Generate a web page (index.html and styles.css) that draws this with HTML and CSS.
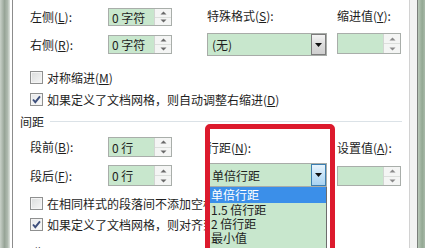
FILE: index.html
```html
<!DOCTYPE html>
<html>
<head>
<meta charset="utf-8">
<link rel="stylesheet" href="styles.css">
</head>
<body>
<div class="screen">
  <div class="bg-left"></div>
  <div class="dialog">
    <div class="block top">
      <div class="lgroup">
        <div class="frow r1"><span class="lbl">左侧(<u>L</u>):</span>
          <div class="spin"><span class="val">0 字符</span><span class="arrows"><span class="ab"><svg width="7" height="4" viewBox="0 0 7 4"><path d="M0.5 3.5 L3.5 0.5 L6.5 3.5Z" fill="#6a6a6a"/></svg></span><span class="ab"><svg width="7" height="4" viewBox="0 0 7 4"><path d="M0.5 0.5 L3.5 3.5 L6.5 0.5Z" fill="#6a6a6a"/></svg></span></span></div>
        </div>
        <div class="frow r2"><span class="lbl">右侧(<u>R</u>):</span>
          <div class="spin"><span class="val">0 字符</span><span class="arrows"><span class="ab"><svg width="7" height="4" viewBox="0 0 7 4"><path d="M0.5 3.5 L3.5 0.5 L6.5 3.5Z" fill="#6a6a6a"/></svg></span><span class="ab"><svg width="7" height="4" viewBox="0 0 7 4"><path d="M0.5 0.5 L3.5 3.5 L6.5 0.5Z" fill="#6a6a6a"/></svg></span></span></div>
        </div>
      </div>
      <div class="col2">
        <div class="clbl">特殊格式(<u>S</u>):</div>
        <div class="select sel-top"><span class="val">(无)</span><span class="dbtn"><svg width="7" height="4" viewBox="0 0 7 4"><path d="M0 0 L7 0 L3.5 4Z" fill="#111"/></svg></span></div>
      </div>
      <div class="col3">
        <div class="clbl">缩进值(<u>Y</u>):</div>
        <div class="spin spin-top"><span class="val"></span><span class="arrows"><span class="ab"><svg width="7" height="4" viewBox="0 0 7 4"><path d="M0.5 3.5 L3.5 0.5 L6.5 3.5Z" fill="#8a8a8a"/></svg></span><span class="ab"><svg width="7" height="4" viewBox="0 0 7 4"><path d="M0.5 0.5 L3.5 3.5 L6.5 0.5Z" fill="#8a8a8a"/></svg></span></span></div>
      </div>
    </div>

    <div class="chk c1"><span class="box"></span><span>对称缩进(<u>M</u>)</span></div>
    <div class="chk c2"><span class="box checked"><svg width="11" height="11" viewBox="0 0 11 11"><path d="M2 5.5 L4.3 8.2 L9 2.3" fill="none" stroke="#3d4f7c" stroke-width="1.9"/></svg></span><span>如果定义了文档网格，则自动调整右缩进(<u>D</u>)</span></div>

    <div class="section"><span>间距</span><span class="line"></span></div>

    <div class="block low">
      <div class="lgroup">
        <div class="frow r1"><span class="lbl">段前(<u>B</u>):</span>
          <div class="spin"><span class="val">0 行</span><span class="arrows"><span class="ab"><svg width="7" height="4" viewBox="0 0 7 4"><path d="M0.5 3.5 L3.5 0.5 L6.5 3.5Z" fill="#6a6a6a"/></svg></span><span class="ab"><svg width="7" height="4" viewBox="0 0 7 4"><path d="M0.5 0.5 L3.5 3.5 L6.5 0.5Z" fill="#6a6a6a"/></svg></span></span></div>
        </div>
        <div class="frow r2"><span class="lbl">段后(<u>F</u>):</span>
          <div class="spin"><span class="val">0 行</span><span class="arrows"><span class="ab"><svg width="7" height="4" viewBox="0 0 7 4"><path d="M0.5 3.5 L3.5 0.5 L6.5 3.5Z" fill="#6a6a6a"/></svg></span><span class="ab"><svg width="7" height="4" viewBox="0 0 7 4"><path d="M0.5 0.5 L3.5 3.5 L6.5 0.5Z" fill="#6a6a6a"/></svg></span></span></div>
        </div>
      </div>
      <div class="col2">
        <div class="clbl">行距(<u>N</u>):</div>
        <div class="select sel-low"><span class="val">单倍行距</span><span class="dbtn blue"><svg width="7" height="4" viewBox="0 0 7 4"><path d="M0 0 L7 0 L3.5 4Z" fill="#111"/></svg></span></div>
      </div>
      <div class="col3">
        <div class="clbl">设置值(<u>A</u>):</div>
        <div class="spin spin-low"><span class="val"></span><span class="arrows"><span class="ab"><svg width="7" height="4" viewBox="0 0 7 4"><path d="M0.5 3.5 L3.5 0.5 L6.5 3.5Z" fill="#8a8a8a"/></svg></span><span class="ab"><svg width="7" height="4" viewBox="0 0 7 4"><path d="M0.5 0.5 L3.5 3.5 L6.5 0.5Z" fill="#8a8a8a"/></svg></span></span></div>
      </div>
    </div>

    <div class="chk c3"><span class="box"></span><span>在相同样式的段落间不添加空格(<u>C</u>)</span></div>
    <div class="chk c4"><span class="box checked"><svg width="11" height="11" viewBox="0 0 11 11"><path d="M2 5.5 L4.3 8.2 L9 2.3" fill="none" stroke="#3d4f7c" stroke-width="1.9"/></svg></span><span>如果定义了文档网格，则对齐到网格(<u>W</u>)</span></div>

    <div class="section prev"><span>预览</span><span class="line"></span></div>
  </div>
  <div class="frame-right"></div>
  <div class="bg-right"></div>
</div>

<div class="droplist">
  <div class="item sel first">单倍行距</div>
  <div class="item">1.5 倍行距</div>
  <div class="item">2 倍行距</div>
  <div class="item">最小值</div>
</div>
<div class="redbox"></div>
</body>
</html>
```

FILE: styles.css
```css
html, body {
  margin: 0;
  padding: 0;
}
body {
  width: 425px;
  height: 248px;
  overflow: hidden;
  position: relative;
  background: #ffffff;
  font-family: "Noto Sans CJK SC", "Microsoft YaHei", sans-serif;
  font-size: 12px;
  color: #1e1e1e;
}
u {
  text-decoration: underline;
  text-underline-offset: 1px;
  text-decoration-thickness: 1px;
}
.screen {
  display: flex;
  height: 248px;
}
.bg-left {
  width: 10px;
  flex: none;
  background: linear-gradient(to right, #c9d1c9, #97a497 45%, #aeb9ae 75%, #dfe4df);
}
.dialog {
  flex: none;
  box-sizing: border-box;
  width: 398px;
  margin-left: 2px;
  border-left: 1px solid #8c8c8c;
  border-right: 1px solid #d2d2d2;
  padding-left: 17px;
  background: #ffffff;
}
.frame-right {
  flex: none;
  width: 7px;
  background: #f2f3f2;
  border-right: 1px solid #7a7f7a;
}
.bg-right {
  flex: none;
  width: 7px;
  background: linear-gradient(to right, #b8c8b8, #93a893 60%, #a9baa9);
}

/* blocks */
.block {
  display: flex;
  align-items: flex-start;
}
.lgroup {
  width: 142px;
  flex: none;
}
.frow {
  display: flex;
  align-items: center;
}
.lbl {
  width: 78px;
  flex: none;
  line-height: 16px;
}
.col2 {
  flex: none;
  width: 120px;
  margin-left: 35px;
}
.col3 {
  flex: none;
  width: 64px;
  margin-left: 10px;
}
.clbl {
  height: 16px;
  line-height: 16px;
  white-space: nowrap;
}

/* spinner */
.spin {
  box-sizing: border-box;
  width: 64px;
  height: 100%;
  display: flex;
  border: 1px solid #a9aeaa;
  background: #c8e7cd;
}
.spin .val {
  flex: 1;
  padding-left: 3px;
  display: flex;
  align-items: center;
  white-space: nowrap;
}
.arrows {
  width: 16px;
  flex: none;
  display: flex;
  flex-direction: column;
  background: #f4f5f4;
  border-left: 1px solid #d2d6d2;
}
.ab {
  flex: 1;
  display: flex;
  align-items: center;
  justify-content: center;
}
.ab + .ab {
  border-top: 1px solid #dcdfdc;
}
.ab svg {
  display: block;
}

/* select */
.select {
  box-sizing: border-box;
  width: 120px;
  display: flex;
  border: 1px solid #a8aca8;
  background: #c8e7cd;
}
.select .val {
  flex: 1;
  display: flex;
  align-items: center;
  padding-left: 4px;
  white-space: nowrap;
}
.dbtn {
  width: 15px;
  flex: none;
  display: flex;
  align-items: center;
  justify-content: center;
  box-sizing: border-box;
  border: 1px solid #7c7c7c;
  background: linear-gradient(#f4f4f4, #dcdcdc 50%, #cfcfcf);
}
.dbtn.blue {
  border-color: #3c7fb1;
  background: linear-gradient(#e8f4fc, #c4e2f7 50%, #a9d3f1);
}

/* top block sizes */
.top .r1 { margin-top: 8px; height: 18px; }
.top .r2 { margin-top: 9px; height: 19px; }
.top .clbl { margin-top: 8px; }
.sel-top { margin-top: 9px; height: 23px; }
.spin-top { margin-top: 9px; height: 21px; }

/* lower block sizes */
.low .r1 { margin-top: 6px; height: 20px; }
.low .r2 { margin-top: 8px; height: 21px; }
.low .clbl { margin-top: 9px; }
.sel-low { margin-top: 7px; height: 24px; }
.spin-low { margin-top: 10px; height: 20px; }

/* checkboxes */
.chk {
  display: flex;
  align-items: center;
  height: 20px;
  white-space: nowrap;
}
.c1 { margin-top: 11px; }
.c2 { margin-top: 2px; }
.c3 { margin-top: 6px; }
.c4 { margin-top: 1px; }
.box {
  box-sizing: border-box;
  width: 13px;
  height: 13px;
  flex: none;
  margin-right: 4px;
  border: 1px solid #8f9090;
  background: linear-gradient(135deg, #dadcdc, #f6f6f6);
  box-shadow: inset 0 0 0 1px #f4f4f4;
  display: flex;
  align-items: center;
  justify-content: center;
}
.box.checked {
  background: linear-gradient(135deg, #e6e8ea, #fbfbfb);
}
.box svg {
  display: block;
}

/* section header */
.section {
  display: flex;
  align-items: center;
  height: 20px;
  margin-left: -10px;
  margin-right: 7px;
  margin-top: 2px;
}
.section .line {
  flex: 1;
  height: 1px;
  margin-left: 6px;
  background: #dbe2e7;
}
.section.prev {
  margin-top: 8px;
}

/* dropdown list overlay */
.droplist {
  position: absolute;
  left: 207px;
  top: 187px;
  width: 120px;
  height: 70px;
  box-sizing: border-box;
  border: 1px solid #6d6d6d;
  border-top: none;
  background: #c8e7cd;
}
.item {
  height: 14px;
  line-height: 14px;
  padding-left: 3px;
  white-space: nowrap;
}
.item.first {
  height: 16px;
  line-height: 16px;
}
.item.sel {
  background: #3b8fe9;
  color: #ffffff;
}

/* red annotation box */
.redbox {
  position: absolute;
  left: 205px;
  top: 124px;
  width: 130px;
  height: 150px;
  box-sizing: border-box;
  border: 5px solid #dc1a2d;
  border-radius: 5px;
}
```
